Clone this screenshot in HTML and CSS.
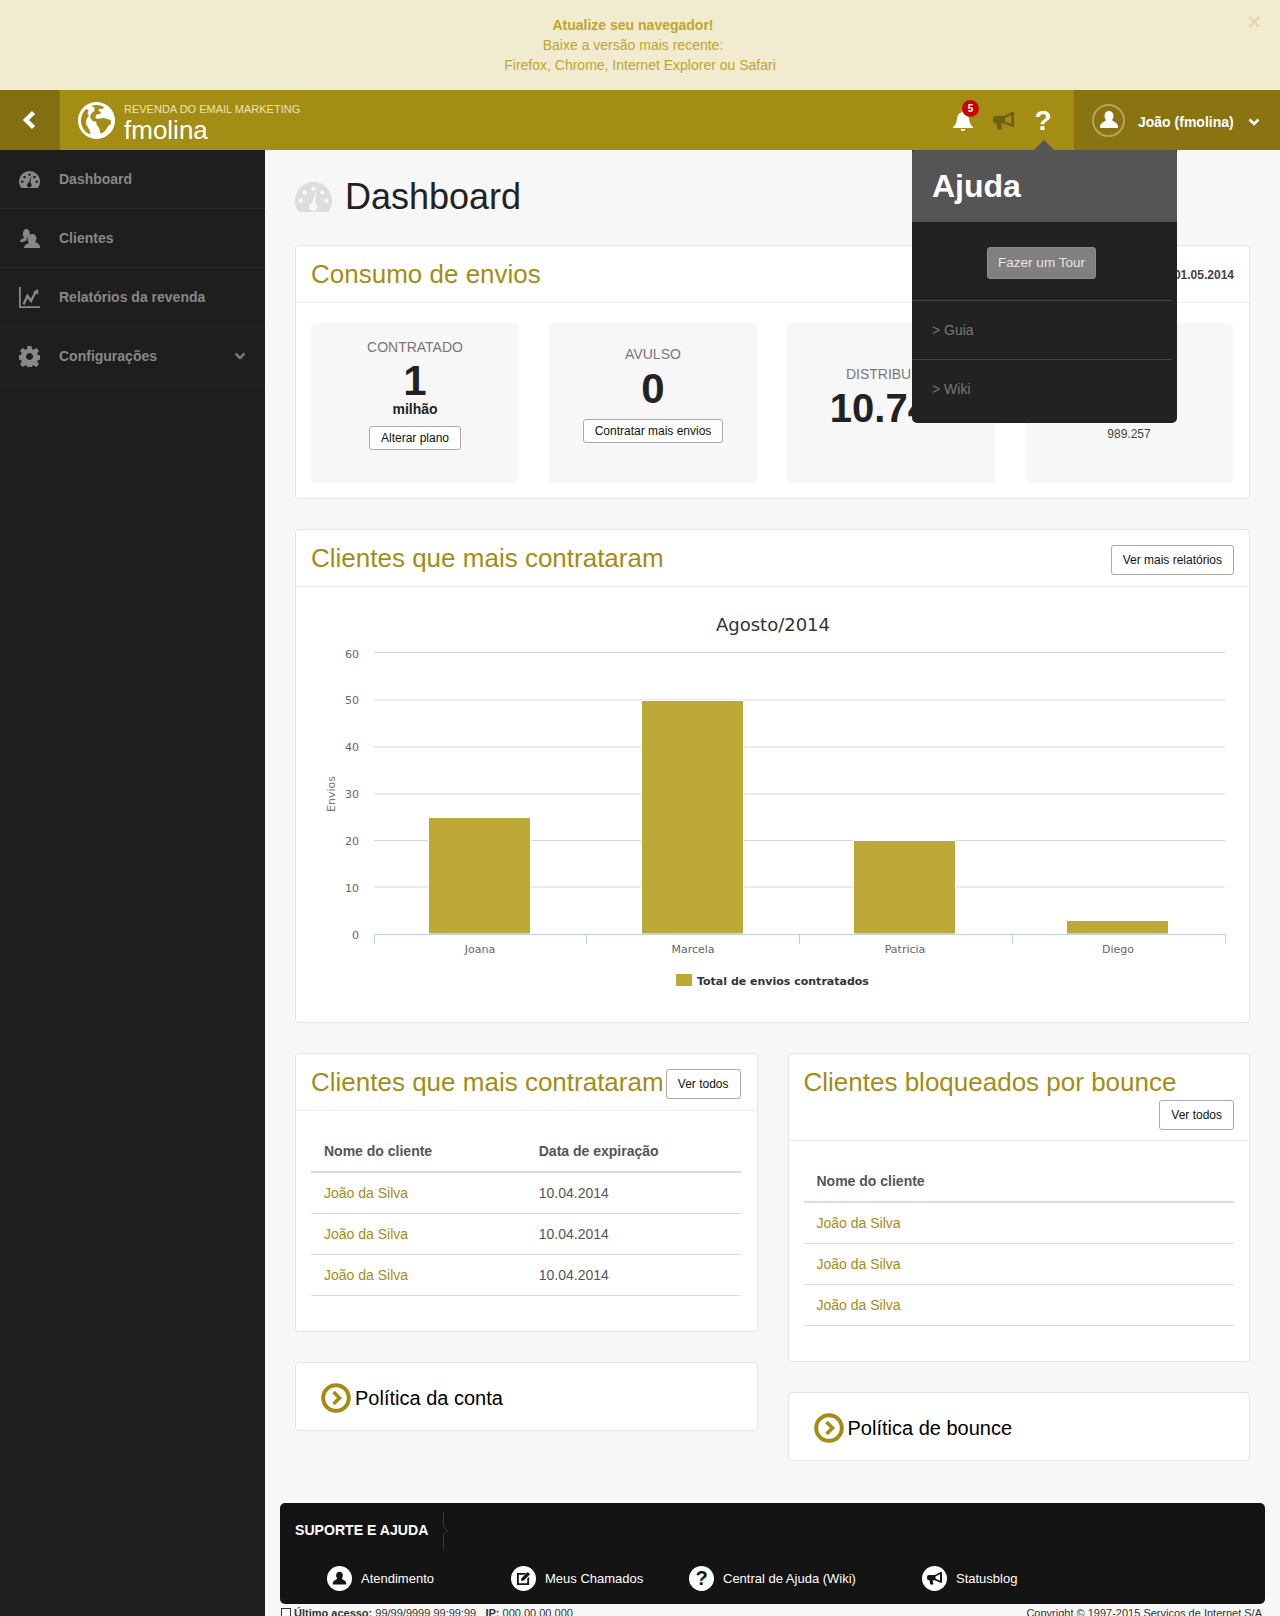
FILE: index.html
```html
<!DOCTYPE html>
<html lang="pt-BR">
<head>
  <meta charset="UTF-8">
  <meta name="viewport" content="width=device-width, initial-scale=1.0">
  <title>Dashboard</title>
  <link rel="stylesheet" href="styles.css">
</head>
<body>
  <svg class="icon-defs" width="0" height="0">
    <symbol id="i-gauge" viewBox="0 0 36 29">
      <path fill-rule="evenodd" d="M3.75 29A18 18 0 1 1 32.25 29ZM18 4a2.2 2.2 0 1 0 .01 0ZM9.5 8a2.2 2.2 0 1 0 .01 0ZM26.5 8a2.2 2.2 0 1 0 .01 0ZM5.5 16a2.2 2.2 0 1 0 .01 0ZM30.5 16a2.2 2.2 0 1 0 .01 0ZM21 8.5L19.6 20.5a4 4 0 1 1-3.2-.2Z"/>
    </symbol>
    <symbol id="i-users" viewBox="0 0 21 21">
      <path d="M7 1c2.4 0 3.8 1.8 3.8 4.2 0 1.100-.3 2.200-.9 3.100-1.700.6-2.500 2.300-2.200 4.300-1.500.5-2.900 1-3.700 1.400H1c0-2.300 2-3.200 4.100-4-.9-1.200-1.300-3-1.100-4.800C4.200 2.700 5.300 1 7 1Z"/>
      <path d="M13.500 6c2.400 0 3.900 1.900 3.900 4.200 0 1.500-.5 2.700-1.300 3.600.1.900 4.900 1.600 4.900 5.200v1H5c0-3.600 4.800-4.300 5-5.200-.8-.9-1.300-2.100-1.300-3.600C8.700 7.900 11.100 6 13.500 6Z"/>
    </symbol>
    <symbol id="i-chart" viewBox="0 0 21 21">
      <path d="M0 0h1.800v19.200H21V21H0Z"/>
      <path d="M4.500 17.500L8.500 9l3.500 5 4.500-9" fill="none" stroke="currentColor" stroke-width="2.400"/>
      <path d="M14 5l5-3 .5 5.500Z"/>
    </symbol>
    <symbol id="i-gear" viewBox="0 0 21 21">
      <path fill-rule="evenodd" d="M8.500 0h4l.5 3 1.800.8 2.500-1.800 2.800 2.800-1.800 2.500.7 1.700 3 .5v4l-3 .5-.7 1.800 1.800 2.500-2.800 2.800-2.500-1.800-1.800.7-.5 3h-4l-.5-3-1.700-.7-2.500 1.800-2.800-2.800 1.800-2.500-.8-1.800-3-.5v-4l3-.5.8-1.700-1.800-2.500 2.800-2.800 2.500 1.800 1.700-.8ZM10.500 7a3.500 3.500 0 1 0 .01 0Z"/>
    </symbol>
    <symbol id="i-globe" viewBox="0 0 37 37">
      <path fill-rule="evenodd" d="M18.500 0a18.500 18.500 0 1 0 .01 0ZM18.500 3a15.500 15.500 0 0 1 8 2.200l-2.500 2-2.500-.6-1 2.200 2.500 1.200-.8 2-3.700.4-1.200 3.200 2 1.500 6-1.200 4.500 1 3.200 1.500c0 1.500-.2 3-.7 4.300l-2.300 1.300-1.800 3.500-2.500 2.500-2 1.300c-1 .3-1.500-.2-1.600-1.200l-1-4-2.400-3-.5-3.300-3.500-.8-2.700-3.500 1.300-4 3-2.500.5-3.500L13 3.900c1.700-.6 3.600-.9 5.500-.9ZM8 7l2.500 1-1 4 1.500 1.500L8.500 17l-.7 4.500 2.200 4 2 3.500.4 3.300C7 30.700 3 25 3 18.500 3 14 4.900 10 8 7Z"/>
    </symbol>
    <symbol id="i-person" viewBox="0 0 20 20">
      <path d="M10 1c2.800 0 4.500 2.100 4.500 4.800 0 1.800-.6 3.300-1.500 4.300.1 1.300 6 2.200 6 6.900v1H1v-1c0-4.700 5.900-5.600 6-6.900-.9-1-1.500-2.500-1.500-4.300C5.500 3.100 7.200 1 10 1Z"/>
    </symbol>
    <symbol id="i-bell" viewBox="0 0 20 20">
      <path d="M10 0c1 0 1.500.6 1.500 1.400 3 .7 4.300 3.200 4.500 6.100.2 3.800 1.200 6.200 4 8.500v1H0v-1c2.800-2.300 3.800-4.700 4-8.500.2-2.900 1.500-5.400 4.500-6.100C8.500.6 9 0 10 0ZM7.500 18h5a2.500 2 0 0 1-5 0Z"/>
    </symbol>
    <symbol id="i-horn" viewBox="0 0 21 18">
      <path fill-rule="evenodd" d="M19 0h2v15h-2l-8-3.500H8L9 17.500H4.500L3.500 11.500H3A3 3 0 0 1 0 8.500V7A3 3 0 0 1 3 4H11ZM18.300 3L12 6v3.500L18.300 12Z"/>
    </symbol>
    <symbol id="i-edit" viewBox="0 0 16 16">
      <path fill-rule="evenodd" d="M1 2h10L9 4H3v9h9V8l2-2v9H1Z"/>
      <path d="M12.500 1L15 3.500 8 10.500H5.500V8Z"/>
    </symbol>
    <symbol id="i-chev" viewBox="0 0 12 8">
      <path d="M1.500 1.500L6 6l4.500-4.500" fill="none" stroke="currentColor" stroke-width="2.600"/>
    </symbol>
    <symbol id="i-go" viewBox="0 0 30 30">
      <circle cx="15" cy="15" r="12.800" fill="none" stroke="currentColor" stroke-width="4"/>
      <path d="M12.500 9l6 6-6 6" fill="none" stroke="currentColor" stroke-width="3.600"/>
    </symbol>
  </svg>

  <div class="page">
    <div class="browser-alert">
      <div class="alert-line"><strong>Atualize seu navegador!</strong></div>
      <div class="alert-line">Baixe a versão mais recente:</div>
      <div>Firefox, Chrome, Internet Explorer ou Safari</div>
      <span class="alert-close">&times;</span>
    </div>

    <header class="topbar">
      <a class="back-btn">
        <svg width="15" height="20" viewBox="0 0 15 20"><path d="M11.500 2.500L4 10l7.500 7.500" fill="none" stroke="#fff" stroke-width="4.500"/></svg>
      </a>
      <div class="brand">
        <svg class="brand-globe"><use href="#i-globe"/></svg>
        <div class="brand-text">
          <span class="brand-small">REVENDA DO EMAIL MARKETING</span>
          <span class="brand-name">fmolina</span>
        </div>
      </div>
      <nav class="top-icons">
        <a class="top-icon">
          <svg class="icon-bell"><use href="#i-bell"/></svg>
          <span class="badge">5</span>
        </a>
        <a class="top-icon"><svg class="icon-horn"><use href="#i-horn"/></svg></a>
        <a class="top-icon help-mark">?</a>
      </nav>
      <div class="user-menu">
        <span class="avatar"><svg><use href="#i-person"/></svg></span>
        <span class="user-name">João (fmolina)</span>
        <svg class="user-chev"><use href="#i-chev"/></svg>
      </div>

      <div class="help-pop">
        <h3>Ajuda</h3>
        <div class="help-tour"><a class="tour-btn">Fazer um Tour</a></div>
        <a class="help-link">&gt; Guia</a>
        <a class="help-link">&gt; Wiki</a>
      </div>
    </header>

    <div class="layout">
      <aside class="sidebar">
        <a class="side-item"><svg class="side-gauge"><use href="#i-gauge"/></svg>Dashboard</a>
        <a class="side-item"><svg><use href="#i-users"/></svg>Clientes</a>
        <a class="side-item"><svg><use href="#i-chart"/></svg>Relatórios da revenda</a>
        <a class="side-item"><svg><use href="#i-gear"/></svg>Configurações<svg class="side-chev"><use href="#i-chev"/></svg></a>
      </aside>

      <main class="main">
        <div class="content">
          <h1 class="page-title"><svg><use href="#i-gauge"/></svg>Dashboard</h1>

          <section class="card">
            <div class="card-head">
              <h2>Consumo de envios</h2>
              <span class="period">01.04.2014 a 01.05.2014</span>
            </div>
            <div class="stats">
              <div class="stat stat-plan">
                <span class="stat-label">CONTRATADO</span>
                <span class="stat-num">1</span>
                <span class="stat-unit">milhão</span>
                <a class="btn btn-small">Alterar plano</a>
              </div>
              <div class="stat stat-extra">
                <span class="stat-label">AVULSO</span>
                <span class="stat-num">0</span>
                <a class="btn btn-small">Contratar mais envios</a>
              </div>
              <div class="stat stat-used">
                <span class="stat-label">DISTRIBUÍDO</span>
                <span class="stat-num">10.743</span>
              </div>
              <div class="stat stat-left">
                <span class="stat-label">SALDO</span>
                <span class="stat-note">989.257</span>
              </div>
            </div>
          </section>

          <section class="card">
            <div class="card-head">
              <h2>Clientes que mais contrataram</h2>
              <a class="btn">Ver mais relatórios</a>
            </div>
            <svg class="chart" viewBox="296 587 953 435">
              <text class="chart-title" x="773" y="631" text-anchor="middle">Agosto/2014</text>
              <g class="chart-grid">
                <path d="M374 652.500H1225M374 700H1225M374 747H1225M374 794H1225M374 840.500H1225M374 887H1225"/>
              </g>
              <g class="chart-y" text-anchor="end">
                <text x="359" y="658">60</text>
                <text x="359" y="704">50</text>
                <text x="359" y="751">40</text>
                <text x="359" y="798">30</text>
                <text x="359" y="845">20</text>
                <text x="359" y="892">10</text>
                <text x="359" y="939">0</text>
              </g>
              <text class="chart-axis-name" transform="translate(335 794) rotate(-90)" text-anchor="middle">Envios</text>
              <g class="chart-bars">
                <rect x="428.500" y="817.500" width="102" height="116.500"/>
                <rect x="641.500" y="700.500" width="102" height="233.500"/>
                <rect x="853.500" y="840.500" width="102" height="93.500"/>
                <rect x="1066.500" y="920.500" width="102" height="13.500"/>
              </g>
              <path class="chart-axis" d="M374.500 944V934.500H1225.500V944M586.500 934.500V944M799.500 934.500V944M1012.500 934.500V944"/>
              <g class="chart-x" text-anchor="middle">
                <text x="480" y="953">Joana</text>
                <text x="693" y="953">Marcela</text>
                <text x="905" y="953">Patricia</text>
                <text x="1118" y="953">Diego</text>
              </g>
              <rect class="legend-box" x="676" y="974" width="16" height="12"/>
              <text class="legend-text" x="697" y="985">Total de envios contratados</text>
            </svg>
          </section>

          <div class="columns">
            <div class="column column-left">
              <section class="card">
                <div class="card-head">
                  <h2>Clientes que mais contrataram</h2>
                  <a class="btn">Ver todos</a>
                </div>
                <div class="table-wrap">
                  <table class="data-table">
                    <thead>
                      <tr><th class="col-name">Nome do cliente</th><th>Data de expiração</th></tr>
                    </thead>
                    <tbody>
                      <tr><td><a>João da Silva</a></td><td>10.04.2014</td></tr>
                      <tr><td><a>João da Silva</a></td><td>10.04.2014</td></tr>
                      <tr><td><a>João da Silva</a></td><td>10.04.2014</td></tr>
                    </tbody>
                  </table>
                </div>
              </section>
              <a class="card policy"><svg><use href="#i-go"/></svg>Política da conta</a>
            </div>

            <div class="column">
              <section class="card">
                <div class="card-head">
                  <h2>Clientes bloqueados por bounce</h2>
                  <a class="btn">Ver todos</a>
                </div>
                <div class="table-wrap">
                  <table class="data-table">
                    <thead>
                      <tr><th>Nome do cliente</th></tr>
                    </thead>
                    <tbody>
                      <tr><td><a>João da Silva</a></td></tr>
                      <tr><td><a>João da Silva</a></td></tr>
                      <tr><td><a>João da Silva</a></td></tr>
                    </tbody>
                  </table>
                </div>
              </section>
              <a class="card policy"><svg><use href="#i-go"/></svg>Política de bounce</a>
            </div>
          </div>
        </div>

        <footer class="support">
          <div class="support-title"><span>SUPORTE E AJUDA</span></div>
          <div class="support-links">
            <a class="support-link link-a"><span class="round"><svg><use href="#i-person"/></svg></span>Atendimento</a>
            <a class="support-link link-b"><span class="round"><svg><use href="#i-edit"/></svg></span>Meus Chamados</a>
            <a class="support-link link-c"><span class="round round-q">?</span>Central de Ajuda (Wiki)</a>
            <a class="support-link"><span class="round"><svg><use href="#i-horn"/></svg></span>Statusblog</a>
          </div>
        </footer>
        <div class="statusline">
          <span><i class="check"></i><b>Último acesso:</b> 99/99/9999 99:99:99 &nbsp; <b>IP:</b> 000.00.00.000</span>
          <span>Copyright © 1997-2015 Serviços de Internet S/A</span>
        </div>
      </main>
    </div>
  </div>
</body>
</html>
```

FILE: styles.css
```css
* {
  box-sizing: border-box;
}

body {
  margin: 0;
  background-color: #f7f7f7;
  font-family: "Liberation Sans", Arial, sans-serif;
  font-size: 14px;
  color: #333;
}

.icon-defs {
  position: absolute;
}

.page {
  height: 1616px;
  overflow: hidden;
}

.browser-alert {
  position: relative;
  height: 90px;
  padding-top: 15px;
  background-color: #f1ecd0;
  color: #bfa52c;
  line-height: 20px;
  text-align: center;
}

.alert-line {
  padding-right: 14px;
}

.alert-close {
  position: absolute;
  top: 12px;
  right: 19px;
  font-size: 23px;
  font-weight: bold;
  line-height: 20px;
  color: #e4dbac;
}

/* topo */
.topbar {
  position: relative;
  display: flex;
  align-items: stretch;
  height: 60px;
  background-color: #a38d14;
  color: #fff;
}

.back-btn {
  display: flex;
  align-items: center;
  justify-content: center;
  width: 60px;
  background-color: #826f12;
  border-right: 1px solid #8a7611;
  padding-right: 1px;
}

.brand {
  display: flex;
  align-items: center;
  gap: 9px;
  padding-left: 18px;
  flex: 1;
}

.brand-globe {
  width: 37px;
  height: 37px;
  fill: #fff;
}

.brand-text {
  display: flex;
  flex-direction: column;
  padding-top: 7px;
}

.brand-small {
  font-size: 11px;
  line-height: 13px;
  margin-bottom: 1px;
  color: #eee3b0;
}

.brand-name {
  font-size: 26px;
  line-height: 27px;
}

.top-icons {
  display: flex;
  align-items: center;
  padding-top: 1px;
  margin-right: 11px;
}

.top-icon {
  position: relative;
  display: flex;
  justify-content: center;
  width: 40px;
}

.icon-bell {
  width: 20px;
  height: 20px;
  fill: #fff;
}

.icon-horn {
  width: 21px;
  height: 18px;
  fill: #6f5f10;
}

.help-mark {
  font-size: 28px;
  font-weight: bold;
  line-height: 30px;
}

.badge {
  position: absolute;
  top: -11px;
  left: 19px;
  width: 17px;
  height: 17px;
  border-radius: 50%;
  background-color: #cc0000;
  font-size: 10px;
  font-weight: bold;
  line-height: 17px;
  text-align: center;
}

.user-menu {
  display: flex;
  align-items: center;
  width: 206px;
  padding-left: 18px;
  background-color: #8a7412;
  font-weight: bold;
}

.avatar {
  display: flex;
  align-items: center;
  justify-content: center;
  width: 33px;
  height: 33px;
  border: 2px solid #b5a65f;
  border-radius: 50%;
  margin-right: 13px;
}

.avatar svg {
  width: 20px;
  height: 20px;
  fill: #fff;
}

.user-name {
  width: 110px;
  margin-top: 4px;
}

.user-chev {
  width: 12px;
  height: 8px;
  margin-top: 3px;
  color: #fff;
}

/* popover de ajuda */
.help-pop {
  position: absolute;
  top: 60px;
  right: 103px;
  width: 265px;
  height: 273px;
  background-color: #222;
  border-radius: 0 0 5px 5px;
  z-index: 5;
}

.help-pop::before {
  content: "";
  position: absolute;
  top: -10px;
  left: 122px;
  border-left: 10px solid transparent;
  border-right: 10px solid transparent;
  border-bottom: 10px solid #555;
}

.help-pop h3 {
  margin: 0;
  height: 72px;
  padding-left: 20px;
  background-color: #555;
  font-size: 32px;
  line-height: 72px;
  color: #fff;
  border-radius: 3px 3px 0 0;
}

.help-tour {
  height: 79px;
  margin-right: 5px;
  padding-top: 25px;
  padding-left: 75px;
  border-bottom: 1px solid #444;
}

.tour-btn {
  display: block;
  width: 109px;
  height: 32px;
  background-color: #808080;
  border: 1px solid #8c8c8c;
  border-radius: 3px;
  font-size: 13.500px;
  line-height: 30px;
  text-align: center;
  color: #e6e6e6;
}

.help-link {
  display: block;
  height: 59px;
  margin-right: 5px;
  padding-left: 20px;
  border-bottom: 1px solid #444;
  font-size: 14px;
  line-height: 59px;
  color: #777;
}

.help-link:last-child {
  border-bottom: 0;
}

/* corpo */
.layout {
  display: flex;
}

.sidebar {
  flex: none;
  width: 265px;
  height: 1466px;
  background-color: #1e1e1e;
}

.side-item {
  display: flex;
  align-items: center;
  height: 59px;
  padding: 0 19px;
  border-bottom: 1px solid #2a2a2a;
  font-weight: bold;
  color: #888;
}

.side-item svg {
  flex: none;
  width: 21px;
  height: 21px;
  margin-right: 19px;
  fill: #888;
}

.side-item .side-gauge {
  height: 17px;
}

.side-item .side-chev {
  width: 12px;
  height: 8px;
  margin: 0 0 0 auto;
  color: #777;
  fill: none;
}

.main {
  flex: 1;
  min-width: 0;
  padding: 0 15px;
}

.content {
  padding: 0 15px;
  height: 1353px;
}

.page-title {
  display: flex;
  align-items: center;
  height: 95px;
  margin: 0;
  padding-bottom: 2px;
  font-size: 36px;
  font-weight: normal;
  color: #222;
}

.page-title svg {
  width: 37px;
  height: 30px;
  margin-right: 13px;
  fill: #ddd;
}

.card {
  background-color: #fff;
  border: 1px solid #e4e4e4;
  border-radius: 4px;
  margin-bottom: 30px;
}

.card-head {
  display: flex;
  flex-wrap: wrap;
  justify-content: space-between;
  align-items: flex-start;
  padding: 15px 15px 10px;
  border-bottom: 1px solid #ececec;
}

.card-head h2 {
  margin: 0 0 4px;
  font-size: 26px;
  font-weight: normal;
  line-height: 27px;
  color: #a38d14;
}

.period {
  margin-top: 7px;
  font-size: 12px;
  font-weight: bold;
  color: #444;
}

.btn {
  display: block;
  padding: 0 11px;
  height: 30px;
  margin-left: auto;
  background-color: #fff;
  border: 1px solid #aaa;
  border-radius: 3px;
  font-size: 12px;
  line-height: 28px;
  color: #111;
}

.btn-small {
  height: 24px;
  margin: 0;
  line-height: 22px;
}

.stats {
  display: grid;
  grid-template-columns: repeat(4, 208px);
  gap: 30px;
  padding: 20px 15px 15px;
}

.stat {
  display: flex;
  flex-direction: column;
  align-items: center;
  height: 160px;
  background-color: #f7f7f7;
  border-radius: 4px;
}

.stat-plan {
  padding-top: 16px;
}

.stat-extra {
  padding-top: 23px;
}

.stat-used,
.stat-left {
  padding-top: 43px;
}

.stat-label {
  font-size: 14px;
  line-height: 17px;
  color: #777;
}

.stat-num {
  margin-top: 6px;
  font-size: 42px;
  font-weight: bold;
  line-height: 39px;
  color: #222;
}

.stat-plan .stat-num {
  margin-top: 5px;
}

.stat-used .stat-num {
  font-size: 40px;
}

.stat-unit {
  font-size: 14px;
  font-weight: bold;
  line-height: 18px;
  margin-bottom: 8px;
  color: #222;
}

.stat-extra .btn-small {
  margin-top: 11px;
}

.stat-note {
  margin-top: 44px;
  font-size: 12px;
  line-height: 14px;
  color: #444;
}

.chart {
  display: block;
  width: 953px;
  height: 435px;
  font-family: "DejaVu Sans", sans-serif;
}

.chart-title {
  font-size: 18px;
  fill: #333;
}

.chart-grid path {
  fill: none;
  stroke: #d8d8d8;
  stroke-width: 1;
}

.chart-y text,
.chart-x text {
  font-size: 11px;
  fill: #666;
}

.chart-axis-name {
  font-size: 11px;
  fill: #777;
}

.chart-bars rect {
  fill: #bca938;
  stroke: #fff;
  stroke-width: 1;
}

.chart-axis {
  fill: none;
  stroke: #c0d0e0;
  stroke-width: 1;
}

.legend-box {
  fill: #bca938;
}

.legend-text {
  font-size: 11px;
  font-weight: bold;
  fill: #333;
}

.columns {
  display: grid;
  grid-template-columns: 1fr 1fr;
  gap: 30px;
}

.table-wrap {
  padding: 19px 15px 35px;
}

.column-left .card-head,
.column-left .table-wrap {
  padding-right: 16px;
}

.data-table {
  width: 100%;
  border-collapse: collapse;
}

.data-table th {
  height: 42px;
  padding: 0 13px;
  border-bottom: 2px solid #ddd;
  text-align: left;
  font-weight: bold;
  color: #555;
}

.data-table .col-name {
  width: 50%;
}

.data-table td {
  height: 41px;
  padding: 0 13px;
  border-bottom: 1px solid #ddd;
  color: #555;
}

.data-table a {
  color: #a38d14;
}

.policy {
  display: flex;
  align-items: center;
  height: 69px;
  padding: 4px 0 0 25px;
  font-size: 20px;
  color: #000;
}

.policy svg {
  width: 30px;
  height: 30px;
  margin-right: 4px;
  color: #a38d14;
}

.support {
  height: 101px;
  background-color: #141414;
  border-radius: 5px;
  color: #fff;
  padding: 9px 15px 0;
}

.support-title {
  display: flex;
  align-items: center;
  height: 37px;
  font-size: 14.100px;
  font-weight: bold;
}

.support-title span {
  position: relative;
  height: 37px;
  line-height: 37px;
  padding-right: 15px;
  border-right: 1px solid #3a3a3a;
}

.support-title span::after {
  content: "";
  position: absolute;
  top: 14px;
  right: -5px;
  width: 8px;
  height: 8px;
  background-color: #141414;
  border-top: 1px solid #3a3a3a;
  border-right: 1px solid #3a3a3a;
  transform: rotate(45deg) scale(.7);
}

.support-links {
  display: flex;
  align-items: center;
  margin-top: 17px;
  padding-left: 32px;
  font-size: 13px;
}

.support-link {
  display: flex;
  align-items: center;
}

.link-a {
  width: 184px;
}

.link-b {
  width: 178px;
}

.link-c {
  width: 233px;
}

.round {
  display: flex;
  align-items: center;
  justify-content: center;
  width: 25px;
  height: 25px;
  margin-right: 9px;
  border-radius: 50%;
  background-color: #fff;
  color: #141414;
}

.round svg {
  width: 15px;
  height: 15px;
  fill: #141414;
}

.round-q {
  font-size: 20px;
  font-weight: bold;
}

.statusline {
  display: flex;
  justify-content: space-between;
  margin-top: 2px;
  padding: 0 3px 0 1px;
  font-size: 11px;
  line-height: 14px;
  color: #333;
}

.check {
  display: inline-block;
  width: 10px;
  height: 10px;
  margin-right: 3px;
  border: 1px solid #333;
  vertical-align: -1px;
}
```
